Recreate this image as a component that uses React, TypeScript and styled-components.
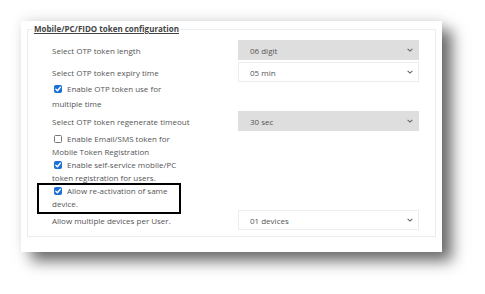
import styled, { createGlobalStyle } from "styled-components"

const Global = createGlobalStyle`
    html, body {
        margin: 0;
        padding: 0;
        background: #ffffff;
    }
    body {
        font-family: "Open Sans", "Liberation Sans", sans-serif;
        color: #555;
    }
`

const Checkmark = () => (
    <svg width="8" height="8" viewBox="0 0 10 10">
        <path d="M2.3 5.2 L4.3 7.2 L7.9 2.9" fill="none" stroke="#fff" strokeWidth="1.8" strokeLinecap="round" strokeLinejoin="round" />
    </svg>
)

const Chevron = () => (
    <svg width="6" height="4" viewBox="0 0 6 4">
        <path d="M0.6 0.8 L3 3.1 L5.4 0.8" fill="none" stroke="#666" strokeWidth="1.1" />
    </svg>
)

type CheckProps = { checked?: boolean; text: string; highlighted?: boolean; tall?: boolean; mt?: number }

const CheckOption = ({ checked, text, highlighted, tall, mt = 0 }: CheckProps) => (
    <CheckBlock $highlighted={highlighted} $tall={tall} $mt={mt}>
        <Box $checked={checked}>{checked && <Checkmark />}</Box>
        {text}
    </CheckBlock>
)

type SelectProps = { label: string; value: string; disabled?: boolean; mt?: number }

const SelectRow = ({ label, value, disabled, mt = 2 }: SelectProps) => (
    <Row $mt={mt}>
        <Label>{label}</Label>
        <Select $disabled={disabled}>
            <span>{value}</span>
            <Chevron />
        </Select>
    </Row>
)

const App = () => {
    return (
        <>
            <Global />
            <Page>
                <Card>
                    <Fieldset>
                        <Legend>Mobile/PC/FIDO token configuration</Legend>
                        <Settings>
                            <SelectRow label="Select OTP token length" value="06 digit" disabled />
                            <SelectRow label="Select OTP token expiry time" value="05 min" mt={1} />
                            <CheckOption checked tall mt={-2} text="Enable OTP token use for multiple time" />
                            <SelectRow label="Select OTP token regenerate timeout" value="30 sec" disabled mt={0} />
                            <CheckOption mt={1} text="Enable Email/SMS token for Mobile Token Registration" />
                            <CheckOption checked mt={1} text="Enable self-service mobile/PC token registration for users." />
                            <CheckOption checked highlighted mt={1} text="Allow re-activation of same device." />
                            <SelectRow label="Allow multiple devices per User." value="01 devices" mt={0} />
                        </Settings>
                    </Fieldset>
                </Card>
            </Page>
        </>
    )
}

export default App


const Page = styled.div`
    width: 485px;
    height: 294px;
    padding: 21px 0 0 21px;
    box-sizing: border-box;
    overflow: hidden;
`

const Card = styled.div`
    width: 421px;
    height: 231px;
    box-sizing: border-box;
    padding: 2px 8px 15px 6px;
    background: #fff;
    box-shadow: 10px 9px 14px rgba(0, 0, 0, 0.58), 0 -3px 12px rgba(0, 0, 0, 0.07);
`

const Fieldset = styled.fieldset`
    margin: 0;
    padding: 0 16px 0 24px;
    height: 100%;
    box-sizing: border-box;
    border: 1px solid #ececec;
`

const Legend = styled.legend`
    padding: 0 1px;
    margin-left: -19px;
    font-size: 8px;
    font-weight: 700;
    color: #444;
    text-decoration: underline;
    line-height: 12px;
`

const Settings = styled.div`
    display: flex;
    flex-direction: column;
    padding-top: 3px;
`

const Row = styled.div<{ $mt: number }>`
    display: grid;
    grid-template-columns: 186px 181px;
    align-items: center;
    height: 20px;
    margin-top: ${p => p.$mt}px;
    margin-bottom: 1px;
`

const Label = styled.span`
    font-size: 8px;
    color: #555;
`

const Select = styled.div<{ $disabled?: boolean }>`
    height: 20px;
    box-sizing: border-box;
    display: flex;
    align-items: center;
    justify-content: space-between;
    padding: 0 5px 0 11px;
    font-size: 8px;
    color: #555;
    background: ${p => (p.$disabled ? "#dedede" : "#fff")};
    border: 1px solid ${p => (p.$disabled ? "#dedede" : "#ececec")};
`

const CheckBlock = styled.div<{ $highlighted?: boolean; $tall?: boolean; $mt: number }>`
    position: relative;
    width: 125px;
    margin-top: ${p => p.$mt}px;
    font-size: 8px;
    line-height: ${p => (p.$tall ? "15px" : "12.5px")};
    color: #555;

    ${p =>
        p.$highlighted &&
        `
        &::after {
            content: "";
            position: absolute;
            left: -15px;
            top: -2px;
            width: 144px;
            height: 31px;
            box-sizing: border-box;
            border: 2px solid #000;
        }
    `}
`

const Box = styled.span<{ $checked?: boolean }>`
    display: inline-block;
    position: relative;
    width: 8px;
    height: 8px;
    box-sizing: border-box;
    margin: 0 5px 0 2px;
    vertical-align: -1px;
    line-height: 0;
    border-radius: 1.5px;
    background: ${p => (p.$checked ? "#1a6fd8" : "#fff")};
    border: 1px solid ${p => (p.$checked ? "#1a6fd8" : "#777")};

    svg {
        display: block;
        position: absolute;
        left: -1px;
        top: -1px;
    }
`
